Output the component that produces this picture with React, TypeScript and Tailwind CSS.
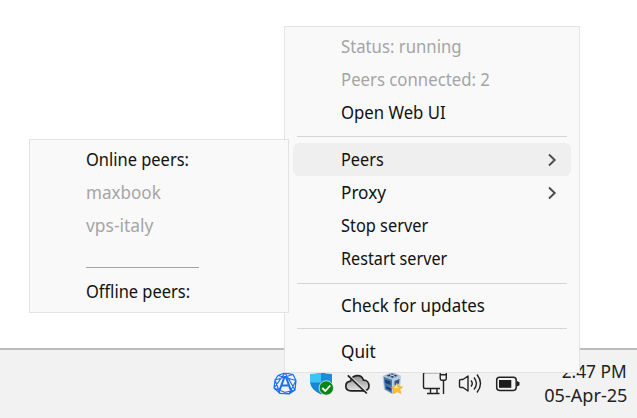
import type { ReactNode } from "react";

const textBase = "inline-block origin-left whitespace-pre";

function Item({ children, muted = false, arrow = false, active = false, scale }: {
  children: ReactNode; muted?: boolean; arrow?: boolean; active?: boolean; scale: string;
}) {
  return (
    <div className={`mx-2 flex h-[33px] items-center justify-between rounded-md pl-12 pr-[13px] ${active ? "bg-[#efefef]" : ""} ${muted ? "text-[#a5a5a5]" : "text-[#111]"}`}>
      <span className={`${textBase} ${scale}`}>{children}</span>
      {arrow && (
        <svg width="12" height="16" viewBox="0 0 12 16" fill="none" stroke="#4b4b4b" strokeWidth="1.9">
          <path d="M3 2.5L8.7 8L3 13.5" />
        </svg>
      )}
    </div>
  );
}

function Separator({ height = "h-[14px]", line = "pt-[7px]" }: { height?: string; line?: string }) {
  return (
    <div className={`mx-3 ${height} ${line}`}>
      <div className="h-px bg-[#d6d6d6]" />
    </div>
  );
}

function MeshIcon() {
  return (
    <svg width="26" height="26" viewBox="0 0 26 26" fill="none" stroke="#1b6ff2" strokeLinejoin="round" strokeLinecap="round">
      <path strokeWidth="1.2" d="M6 4.5L13 1.8L21 3.5L24 9.5L23 19L17 23L8 22.5L2 17L3 9ZM6 4.5L24 9.5M21 3.5L3 9M3 9L8 22.5M24 9.5L17 23M2 17L17 23M23 19L8 22.5M13 1.8L2 17M13 1.8L23 19" />
      <path strokeWidth="2.1" d="M7.8 18.5L12.5 6H14L18.5 18.5M9.5 14.5H17" />
    </svg>
  );
}

function ShieldIcon() {
  return (
    <svg width="25" height="26" viewBox="0 0 25 26">
      <path d="M1 3Q7 3 12 1V12H1Z" fill="#3cc5f4" />
      <path d="M12 1Q17 3 23 3V12H12Z" fill="#178fda" />
      <path d="M1 11.5H12V23.5Q2 19 1 11.5Z" fill="#1687d2" />
      <path d="M12 11.5H23Q22 19 12 23.5Z" fill="#0868af" />
      <circle cx="17.3" cy="17" r="7.2" fill="#078516" stroke="#e5f2e8" strokeWidth=".8" />
      <path d="M13.3 17L16.3 20L21.3 14.5" fill="none" stroke="white" strokeWidth="1.8" />
    </svg>
  );
}

function CloudIcon() {
  return (
    <svg width="28" height="24" viewBox="0 0 28 24">
      <defs><linearGradient id="cloudFill" x2="0" y2="1"><stop stopColor="#8c8c8c" /><stop offset="1" stopColor="#e2e2e2" /></linearGradient></defs>
      <path d="M7 17.8C.2 17.8 .2 9 6.5 8.2C8.5 1.2 17.5 .8 19.5 7.2C26.5 7 26.8 17.8 20.5 17.8Z" fill="url(#cloudFill)" stroke="#222" strokeWidth="1.7" />
      <path d="M4.8 2L24 20.2" stroke="#e5e5e5" strokeWidth="1.6" />
      <path d="M3.8 2.3L22.8 20.5" stroke="#222" strokeWidth="1.7" />
    </svg>
  );
}

function CubeIcon() {
  return (
    <svg width="24" height="26" viewBox="0 0 24 26">
      <path d="M2 5L11 1L20 5L11.5 8.5Z" fill="#a6bad0" />
      <path d="M2 5L11.5 8.5V23L3.5 18.5Z" fill="#4b76aa" />
      <path d="M11.5 8.5L20 5L19 18L11.5 23Z" fill="#b4cbe2" />
      <path d="M5.5 4.8L11 2.5L16.5 4.8L11.5 6.8Z" fill="#203f63" />
      <path d="M9 3.5L14 5.5M13.5 3.5L8.5 5.5" stroke="#d7e4f2" strokeWidth=".9" />
      <path d="M2 5L11.5 8.5L20 5M11.5 8.5V23M2 5L3.5 18.5L11.5 23" fill="none" stroke="#bdcddd" strokeWidth=".9" />
      <path d="M4 8.5L9.5 10.5V14L4.5 12ZM5 15L9.8 17.2V20L5.3 17.5Z" fill="#193f70" />
      <path d="M13.5 10L18.5 8L18 12.5L13.5 14.5Z" fill="#305987" />
      <path d="M15.8 12L17.5 15.8L21.5 15.8L18.8 18.8L20 22.5L16.3 20.8L12.5 22.5L13 18.8L10.3 16.5L14.2 15.8Z" fill="#ffc12e" stroke="#f3a11b" strokeWidth=".6" />
      <path d="M15.8 13.5L16.8 17L13 17" fill="#ffeb94" />
    </svg>
  );
}

function NetworkIcon() {
  return (
    <svg width="26" height="26" viewBox="0 0 26 26" fill="none" stroke="#222" strokeWidth="1.4">
      <path d="M16.5 1.5H3Q1.5 1.5 1.5 3V16Q1.5 17.5 3.5 17.5H18M5 22.5H17.5M8.5 18V22.5M15 18V22.5M21.5 10V23" />
      <path d="M18.2 1.5V7Q18.2 9.3 20 9.3H22.5Q24.3 9.3 24.3 7V1.5M18.2 3.8H24.3" />
    </svg>
  );
}

function VolumeIcon() {
  return (
    <svg width="25" height="24" viewBox="0 0 25 24" fill="none" stroke="#222" strokeWidth="1.4" strokeLinejoin="round">
      <path d="M1.5 8.8Q1.5 7.5 3 7.5H5L10 4V19L5 15.5H3Q1.5 15.5 1.5 14.2Z" />
      <path d="M13 8.5Q15.5 11.5 13 14.5M16 5.5Q20.8 11.5 16 17.5M19 2.5Q26 11.5 19 20.5" />
    </svg>
  );
}

function BatteryIcon() {
  return (
    <svg width="26" height="18" viewBox="0 0 26 18">
      <rect x="1.7" y="2.2" width="19.5" height="13.2" rx="2.8" fill="none" stroke="#222" strokeWidth="1.5" />
      <rect x="4" y="5" width="12.3" height="7.8" fill="#1b1b1b" />
      <path d="M22 6L24.5 7.2V10.3L22 11.5Z" fill="#222" />
    </svg>
  );
}

export default function App() {
  return (
    <main className="relative flex h-[418px] w-[637px] flex-col overflow-hidden bg-white font-['Noto_Sans',sans-serif] text-[17.5px] leading-none">
      <div className="flex-1" />
      <footer className="flex h-[70px] items-start border-t-2 border-[#bcbcbc] bg-[#f2f2f2] pl-[272px] text-[#222]">
        <div className="flex w-[250px] shrink-0 pt-[21px]">
          <div className="w-[37px]"><MeshIcon /></div>
          <div className="w-[35px]"><ShieldIcon /></div>
          <div className="w-[37px] pt-0.5"><CloudIcon /></div>
          <div className="w-[41px]"><CubeIcon /></div>
          <div className="w-[36px]"><NetworkIcon /></div>
          <div className="w-[37px] pt-px"><VolumeIcon /></div>
          <div className="pt-[4px]"><BatteryIcon /></div>
        </div>
        <div className="flex flex-1 flex-col items-end pr-[10px] pt-[9px] leading-6 whitespace-nowrap">
          <span className="origin-right scale-x-[.99]">2:47 PM</span>
          <span className="origin-right scale-x-[1.035]">05-Apr-25</span>
        </div>
      </footer>

      <section className="absolute left-[284px] top-[26px] h-[347px] w-[296px] border border-[#e3e3e3] bg-[#f9f9f9] pt-[3px]">
        <Item muted scale="scale-x-[.955]">Status: running</Item>
        <Item muted scale="scale-x-[.957]">Peers connected: 2</Item>
        <Item scale="scale-x-[.955]">Open Web UI</Item>
        <Separator />
        <Item active arrow scale="scale-x-[.93]">Peers</Item>
        <Item arrow scale="scale-x-[.98]">Proxy</Item>
        <Item scale="scale-x-[.935]">Stop server</Item>
        <Item scale="scale-x-[.925]">Restart server</Item>
        <Separator line="pt-[8px]" />
        <Item scale="scale-x-[.965]">Check for updates</Item>
        <Separator height="h-[13px]" line="pt-[6px]" />
        <Item scale="scale-x-[.98]">Quit</Item>
      </section>

      <section className="absolute left-[29px] top-[139px] h-[174px] w-[260px] border border-[#e3e3e3] bg-[#f9f9f9] pt-[3px]">
        <Item scale="scale-x-[.94]">Online peers:</Item>
        <Item muted scale="scale-x-[.975]">maxbook</Item>
        <Item muted scale="scale-x-[.995]">vps-italy</Item>
        <div className="ml-14 h-[33px] w-[113px] pt-[25px]"><div className="h-px bg-[#a5a5a5]" /></div>
        <Item scale="scale-x-[.94]">Offline peers:</Item>
      </section>
    </main>
  );
}
